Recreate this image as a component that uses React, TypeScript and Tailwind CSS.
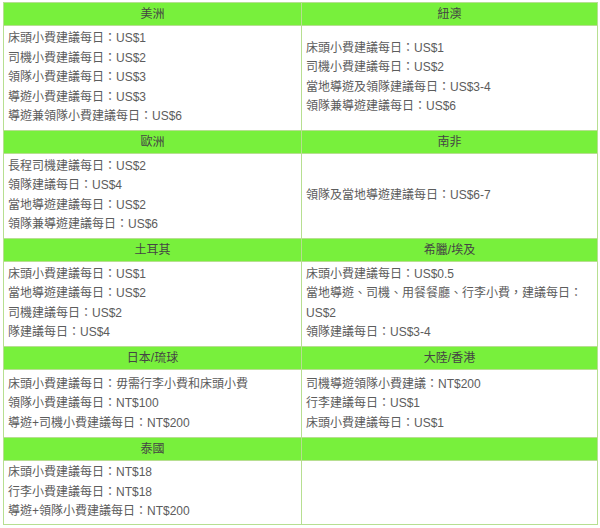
import React from 'react';

type Region = { name: string; lines: string[] };

// 每一列兩個地區，左右並排；pad 為內容列上下留白
const rows: { pad: string; pair: [Region, Region | null] }[] = [
  {
    pad: 'py-[3px]',
    pair: [
      {
        name: '美洲',
        lines: [
          '床頭小費建議每日：US$1',
          '司機小費建議每日：US$2',
          '領隊小費建議每日：US$3',
          '導遊小費建議每日：US$3',
          '導遊兼領隊小費建議每日：US$6',
        ],
      },
      {
        name: '紐澳',
        lines: [
          '床頭小費建議每日：US$1',
          '司機小費建議每日：US$2',
          '當地導遊及領隊建議每日：US$3-4',
          '領隊兼導遊建議每日：US$6',
        ],
      },
    ],
  },
  {
    pad: 'py-[3px]',
    pair: [
      {
        name: '歐洲',
        lines: [
          '長程司機建議每日：US$2',
          '領隊建議每日：US$4',
          '當地導遊建議每日：US$2',
          '領隊兼導遊建議每日：US$6',
        ],
      },
      {
        name: '南非',
        lines: ['領隊及當地導遊建議每日：US$6-7'],
      },
    ],
  },
  {
    pad: 'py-[3px]',
    pair: [
      {
        name: '土耳其',
        lines: [
          '床頭小費建議每日：US$1',
          '當地導遊建議每日：US$2',
          '司機建議每日：US$2',
          '隊建議每日：US$4',
        ],
      },
      {
        name: '希臘/埃及',
        lines: [
          '床頭小費建議每日：US$0.5',
          '當地導遊、司機、用餐餐廳、行李小費，建議每日：',
          'US$2',
          '領隊建議每日：US$3-4',
        ],
      },
    ],
  },
  {
    pad: 'pt-[5px] pb-[4px]',
    pair: [
      {
        name: '日本/琉球',
        lines: [
          '床頭小費建議每日：毋需行李小費和床頭小費',
          '領隊小費建議每日：NT$100',
          '導遊+司機小費建議每日：NT$200',
        ],
      },
      {
        name: '大陸/香港',
        lines: [
          '司機導遊領隊小費建議：NT$200',
          '行李建議每日：US$1',
          '床頭小費建議每日：US$1',
        ],
      },
    ],
  },
  {
    pad: 'pt-[2px] pb-[2px]',
    pair: [
      {
        name: '泰國',
        lines: [
          '床頭小費建議每日：NT$18',
          '行李小費建議每日：NT$18',
          '導遊+領隊小費建議每日：NT$200',
        ],
      },
      null,
    ],
  },
];

// 全形冒號置中顯示（台灣字型的樣子）
const Line: React.FC<{ text: string }> = ({ text }) => {
  const parts = text.split('：');
  return (
    <div className="whitespace-nowrap">
      {parts.map((p, i) => (
        <React.Fragment key={i}>
          {i > 0 && <span className="inline-block w-[12px] text-center">：</span>}
          {p}
        </React.Fragment>
      ))}
    </div>
  );
};

const App: React.FC = () => {
  return (
    <div
      lang="zh-TW"
      className="w-[600px] h-[528px] bg-white pt-[2px] pl-[3px]"
      style={{ fontFamily: '"Liberation Sans", "Noto Sans CJK TC", Arial, sans-serif' }}
    >
      <table className="w-[594px] table-fixed border-collapse border border-[#b7df91] text-[12px]">
        <colgroup>
          <col className="w-[298px]" />
          <col className="w-[296px]" />
        </colgroup>
        <tbody>
          {rows.map(({ pad, pair }, i) => (
            <React.Fragment key={i}>
              {/* Header */}
              <tr>
                {pair.map((region, j) => (
                  <td
                    key={j}
                    className="h-[23px] border border-[#b7df91] bg-[#78f03c] text-center align-middle text-[#444444] p-0 leading-[16px]"
                  >
                    {region?.name ?? ''}
                  </td>
                ))}
              </tr>
              {/* Content */}
              <tr>
                {pair.map((region, j) => (
                  <td
                    key={j}
                    className={`border border-[#b7df91] align-middle px-[4px] ${pad} text-[#5c5c5c] leading-[19.5px]`}
                  >
                    {region?.lines.map((line, k) => <Line key={k} text={line} />)}
                  </td>
                ))}
              </tr>
            </React.Fragment>
          ))}
        </tbody>
      </table>
    </div>
  );
};

export default App;
